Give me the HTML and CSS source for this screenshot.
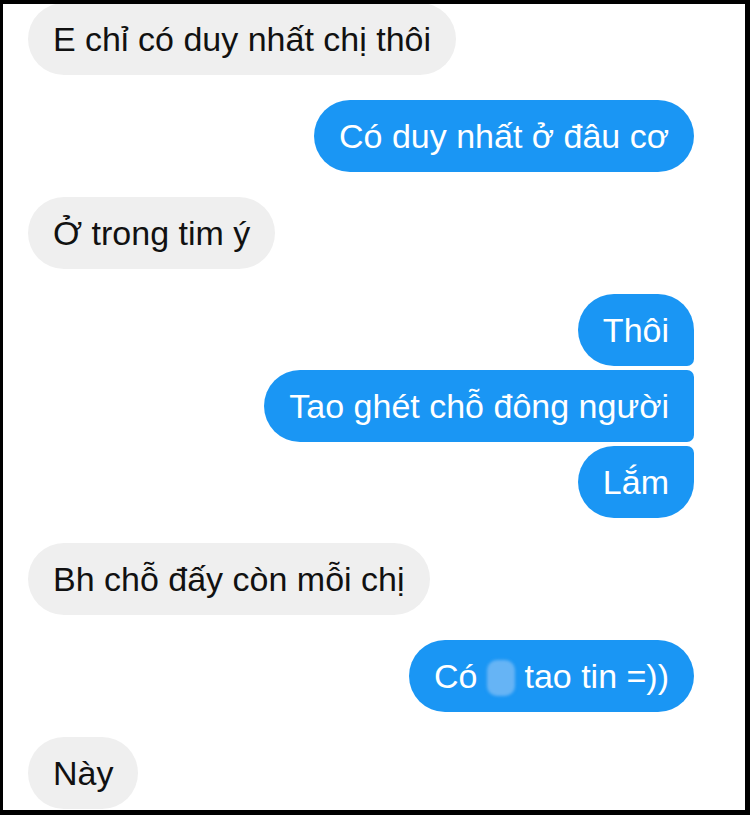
FILE: index.html
```html
<!DOCTYPE html>
<html lang="vi">
  <head>
    <meta charset="UTF-8" />
    <meta name="viewport" content="width=device-width, initial-scale=1.0" />
    <title>Tin nhắn</title>
    <link rel="stylesheet" href="styles.css">
  </head>
  <body>
    <div class="frame">
      <div class="chat">
        <div class="row in first"><div class="bubble">E chỉ có duy nhất chị thôi</div></div>
        <div class="row out"><div class="bubble">Có duy nhất ở đâu cơ</div></div>
        <div class="row in"><div class="bubble">Ở trong tim ý</div></div>

        <div class="row out"><div class="bubble top">Thôi</div></div>
        <div class="row out grouped"><div class="bubble mid">Tao ghét chỗ đông người</div></div>
        <div class="row out grouped"><div class="bubble bottom">Lắm</div></div>

        <div class="row in"><div class="bubble">Bh chỗ đấy còn mỗi chị</div></div>
        <div class="row out"><div class="bubble"><span>Có <span class="hidden-word"></span> tao tin =))</span></div></div>
        <div class="row in"><div class="bubble">Này</div></div>
      </div>
    </div>
  </body>
</html>
```

FILE: styles.css
```css
html,
body {
  margin: 0;
  height: 100%;
  background: #000;
}
.frame {
  box-sizing: border-box;
  height: 815px;
  width: 750px;
  border-style: solid;
  border-color: #000;
  border-width: 4px 5px 5px 3px;
  background: #fff;
  overflow: hidden;
}
.chat {
  display: flex;
  flex-direction: column;
  padding: 0 51px 0 25px;
  font-family: "Liberation Sans", Arial, sans-serif;
  font-size: 34px;
}
.row {
  display: flex;
  margin-top: 25px;
}
.row.first {
  margin-top: -1px;
}
.row.grouped {
  margin-top: 4px;
}
.row.in {
  justify-content: flex-start;
}
.row.out {
  justify-content: flex-end;
}
.bubble {
  height: 72px;
  display: flex;
  align-items: center;
  padding: 0 25px;
  border-radius: 36px;
  white-space: nowrap;
}
.in .bubble {
  background: #efefef;
  color: #111;
}
.out .bubble {
  background: #1a96f4;
  color: #fff;
}
.bubble.top {
  border-bottom-right-radius: 7px;
}
.bubble.mid {
  border-top-right-radius: 7px;
  border-bottom-right-radius: 7px;
}
.bubble.bottom {
  border-top-right-radius: 7px;
}
/* blurred-out word */
.hidden-word {
  display: inline-block;
  vertical-align: -8px;
  width: 28px;
  height: 36px;
  border-radius: 10px;
  background: #66b4f5;
  filter: blur(1.5px);
}
```
